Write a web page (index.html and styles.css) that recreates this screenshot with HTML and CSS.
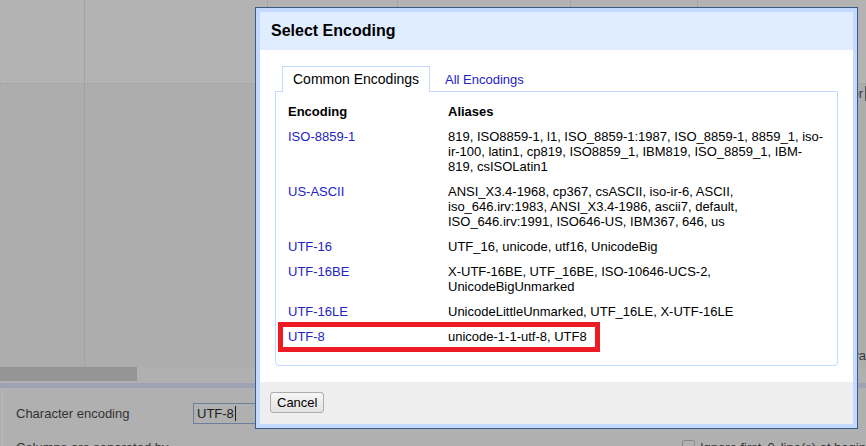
FILE: index.html
```html
<!DOCTYPE html>
<html>
<head>
<meta charset="utf-8">
<title>Select Encoding</title>
<link rel="stylesheet" href="styles.css">
</head>
<body>
<div class="page">
  <div class="grid">
    <div class="grid-head">
      <div class="gcol c-a"></div>
      <div class="gcol c-b"></div>
      <div class="gcol c-c"></div>
      <div class="gcol c-d"></div>
      <div class="gcol c-e"></div>
      <div class="gcol rest"></div>
    </div>
    <div class="grid-body">
      <div class="gcol c-a"></div>
      <div class="gcol c-b"></div>
      <div class="gcol rest">
        <span class="peek peek-top">or</span>
        <span class="peek peek-bottom">va</span>
      </div>
    </div>
  </div>
  <div class="hscroll"><div class="thumb"></div></div>
  <div class="sep"></div>
  <div class="options">
    <div class="opt-row">
      <span class="opt-label">Character encoding</span>
      <span class="opt-input">UTF-8<span class="caret"></span></span>
    </div>
    <div class="opt-row second">
      <span class="opt-label">Columns are separated by</span>
      <span class="opt-right"><span class="chk"></span>Ignore first <span class="num">0</span> line(s) at beginning of file</span>
    </div>
  </div>
</div>

<div class="dialog">
  <div class="dlg-head">Select Encoding</div>
  <div class="dlg-body">
    <div class="tabs">
      <span class="tab active">Common Encodings</span>
      <a class="tab link">All Encodings</a>
    </div>
    <div class="panel">
      <table class="enc">
        <tr><th class="c1">Encoding</th><th>Aliases</th></tr>
        <tr><td><a class="link">ISO-8859-1</a></td><td>819, ISO8859-1, l1, ISO_8859-1:1987, ISO_8859-1, 8859_1, iso-ir-100, latin1, cp819, ISO8859_1, IBM819, ISO_8859_1, IBM-819, csISOLatin1</td></tr>
        <tr><td><a class="link">US-ASCII</a></td><td>ANSI_X3.4-1968, cp367, csASCII, iso-ir-6, ASCII, iso_646.irv:1983, ANSI_X3.4-1986, ascii7, default, ISO_646.irv:1991, ISO646-US, IBM367, 646, us</td></tr>
        <tr><td><a class="link">UTF-16</a></td><td>UTF_16, unicode, utf16, UnicodeBig</td></tr>
        <tr><td><a class="link">UTF-16BE</a></td><td>X-UTF-16BE, UTF_16BE, ISO-10646-UCS-2, UnicodeBigUnmarked</td></tr>
        <tr><td><a class="link">UTF-16LE</a></td><td>UnicodeLittleUnmarked, UTF_16LE, X-UTF-16LE</td></tr>
        <tr><td><a class="link">UTF-8</a></td><td>unicode-1-1-utf-8, UTF8</td></tr>
      </table>
      <div class="highlight"></div>
    </div>
  </div>
  <div class="dlg-foot"><button class="btn">Cancel</button></div>
</div>
</body>
</html>
```

FILE: styles.css
```css
* { box-sizing: border-box; }
html, body { margin: 0; padding: 0; }
body {
  width: 866px;
  height: 446px;
  overflow: hidden;
  position: relative;
  background: #b0b0b0;
  font-family: "Liberation Sans", Arial, sans-serif;
  font-size: 13px;
  color: #000;
}

/* ---------- dimmed page underneath ---------- */
.page { display: flex; flex-direction: column; height: 446px; }
.grid { height: 367px; display: flex; flex-direction: column; flex: none; }
.grid-head {
  height: 84px;
  display: flex;
  background: #b3b3b3;
  border-bottom: 1px dotted #9a9a9a;
  flex: none;
}
.grid-body { flex: 1; display: flex; background: #adadad; }
.gcol { flex: none; border-right: 1px solid #a3a3a3; }
.c-a { width: 85px; }
.c-b { width: 183px; }
.c-c { width: 130px; }
.c-d { width: 173px; }
.c-e { width: 127px; }
.rest { flex: 1; border-right: 0; display: flex; flex-direction: column; align-items: flex-end; }
.peek { color: #3a3a3a; line-height: 15px; }
.peek-top { margin-top: 2px; border-right: 1px solid #555; padding-right: 2px; }
.peek-bottom { margin-top: auto; margin-bottom: 4px; padding-right: 0; }

.hscroll { height: 16px; flex: none; }
.thumb { width: 137px; height: 14px; background: #959595; }
.sep { height: 5px; background: #9ea2b2; flex: none; }

.options {
  flex: 1;
  margin-left: 2px;
  border-left: 1px solid #bababa;
  border-top-left-radius: 3px;
  background: #b0b0b0;
  padding: 15px 0 0 13px;
  color: #333;
}
.opt-row { display: flex; align-items: center; height: 21px; }
.opt-row.second { margin-top: 16px; height: 15px; line-height: 15px; align-items: flex-start; }
.opt-label { width: 177px; flex: none; }
.opt-input {
  width: 120px;
  height: 21px;
  border: 1px solid #6c7e9e;
  padding-left: 3px;
  line-height: 19px;
  color: #1c1c1c;
  display: flex;
  align-items: center;
}
.caret { width: 1px; height: 15px; background: #1c1c1c; margin-left: 1px; }
.opt-right { margin-left: 489px; display: flex; align-items: flex-start; white-space: nowrap; }
.chk {
  width: 13px; height: 13px;
  border: 1px solid #8a8a8a;
  border-radius: 2px;
  margin: 0 5px 0 0;
  flex: none;
}
.num { margin: 0 6px; }

/* ---------- dialog ---------- */
.dialog {
  position: absolute;
  left: 255px;
  top: 7px;
  width: 603px;
  height: 422px;
  border: 1px solid #3d5c83;
  background: #c3d9ff;
  padding: 4px;
  display: flex;
  flex-direction: column;
}
.dlg-head {
  height: 38px;
  flex: none;
  background: #e0ecff;
  padding-left: 11px;
  font-weight: bold;
  font-size: 16px;
  line-height: 38px;
}
.dlg-body {
  height: 332px;
  flex: none;
  background: #fff;
  padding: 16px 15px 0 15px;
}
.dlg-foot {
  flex: 1;
  background: #eeeeee;
  padding: 10px;
}

.tabs {
  display: flex;
  height: 25px;
  padding-left: 7px;
  position: relative;
  z-index: 1;
}
.tab {
  height: 26px;
  padding: 0 14px;
  line-height: 25px;
  font-size: 13px;
  border: 1px solid transparent;
  border-bottom: 0;
}
.tab.active { border-color: #c3d9ff; background: #fff; font-size: 14px; padding: 0 10px; }
.link { color: #2323c4; text-decoration: none; }

.panel {
  position: relative;
  height: 275px;
  border: 1px solid #c3d9ff;
  border-radius: 0 0 4px 4px;
  padding: 7px 11px 0 12px;
}
.enc { border-collapse: collapse; width: 537px; }
.enc th, .enc td {
  padding: 5px 0;
  text-align: left;
  vertical-align: top;
  line-height: 15px;
  font-size: 13px;
}
.enc th { font-weight: bold; }
.enc .c1 { width: 160px; }

.highlight {
  position: absolute;
  left: 2px;
  top: 230px;
  width: 322px;
  height: 30px;
  border: 5px solid #ed1c24;
}

.btn {
  height: 21px;
  padding: 0 6px;
  border: 1px solid #adadad;
  border-radius: 3px;
  background: linear-gradient(#f6f6f6, #e2e2e2);
  font: 13px "Liberation Sans", Arial, sans-serif;
  color: #000;
}
```
